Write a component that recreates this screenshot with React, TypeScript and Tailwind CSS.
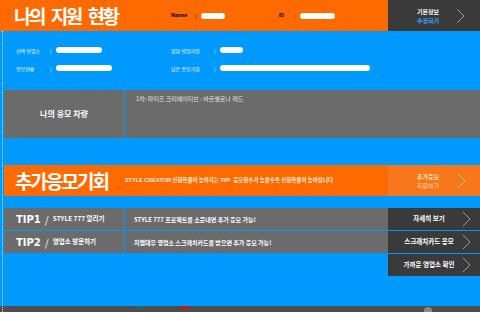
import React from 'react';

const KR = "font-['Noto_Sans_CJK_KR','Noto_Sans',sans-serif]";

const Chevron = ({ color = '#9a9a9a', h = 16 }: { color?: string; h?: number }) => (
  <svg width="9" height={h} viewBox={`0 0 9 ${h}`} className="shrink-0">
    <polyline points={`1,1 8,${h / 2} 1,${h - 1}`} fill="none" stroke={color} strokeWidth="1" />
  </svg>
);

const Pill = ({ w }: { w: string }) => <div className={`h-[6px] rounded-full bg-white ${w}`} />;

const InfoRow = ({ label, pill, lw }: { label: string; pill: string; lw: string }) => (
  <div className="flex h-[6px] items-center">
    <span className={`text-[5px] leading-none text-white ${lw}`}>{label}</span>
    <span className="w-[6px] text-[5px] leading-none text-white">|</span>
    <Pill w={pill} />
  </div>
);

const tips = [
  { tip: 'TIP1', title: 'STYLE 777 알리기', desc: 'STYLE 777 프로젝트를 소문내면 추가 응모 가능!' },
  { tip: 'TIP2', title: '영업소 방문하기', desc: '지엠대우 영업소 스크래치카드를 받으면 추가 응모 가능!' },
];

const buttons = ['자세히 보기', '스크래치카드 응모', '가까운 영업소 확인'];

export default function App() {
  return (
    <div className={`relative flex h-[312px] w-[480px] flex-col overflow-hidden bg-[#0099fe] ${KR}`}>
      {/* header */}
      <div className="flex h-[31px] shrink-0">
        <div className="flex flex-1 items-center bg-[#ff6a00] pl-[14px]">
          <span className="w-[157px] text-[19px] font-bold leading-none tracking-[-2.5px] text-white [word-spacing:5px]">
            나의 지원 현황
          </span>
          <span className="font-['Liberation_Sans',sans-serif] text-[6px] font-bold text-black">Name</span>
          <span className="ml-[8px] mr-[4px] text-[6px] text-black">|</span>
          <Pill w="w-[24px]" />
          <span className="ml-[54px] font-['Liberation_Sans',sans-serif] text-[5px] font-bold text-black">ID</span>
          <span className="ml-[10px] mr-[4px] text-[6px] text-[#a33]">|</span>
          <Pill w="w-[35px]" />
        </div>
        <div className="flex w-[92px] items-center bg-[#3a3a3a] pl-[29px]">
          <div className="flex w-[39px] flex-col text-[6px] font-bold leading-[9px]">
            <span className="text-white">기본정보</span>
            <span className="text-[#3aa4ff]">수정하기</span>
          </div>
          <Chevron />
        </div>
      </div>

      {/* info */}
      <div className="flex h-[59px] shrink-0 pl-[16px] pt-[16px]">
        <div className="flex w-[155px] flex-col gap-[12px]">
          <InfoRow label="선택 영업소" pill="w-[46px]" lw="w-[34px]" />
          <InfoRow label="응모현황" pill="w-[56px]" lw="w-[34px]" />
        </div>
        <div className="flex flex-col gap-[12px]">
          <InfoRow label="담당 영업사원" pill="w-[23px]" lw="w-[43px]" />
          <InfoRow label="남은 응모기회" pill="w-[150px]" lw="w-[43px]" />
        </div>
      </div>

      {/* my car */}
      <div className="ml-[4px] flex h-[48px] shrink-0 gap-px">
        <div className="flex w-[120px] items-center justify-center bg-[#6b6b6b] text-[8px] font-bold text-white">나의 응모 차량</div>
        <div className="flex-1 bg-[#6b6b6b] pl-[11px] pt-[6px] text-[6px] leading-none text-[#e4e4e4]">
          1차: 마티즈 크리에이티브 : 바르셀로나 레드
        </div>
      </div>

      <div className="h-[27px] shrink-0" />

      {/* extra chance */}
      <div className="ml-[4px] flex h-[31px] shrink-0">
        <div className="flex flex-1 items-center bg-[#ff6a00] pl-[11px]">
          <span className="w-[110px] text-[19px] font-bold leading-none tracking-[-2px] text-white">추가응모기회</span>
          <span className="text-[5.5px] font-bold text-[#fff3e0]">
            <span className="font-['Liberation_Sans',sans-serif]">STYLE CREATOR</span> 신청확률이 높아지는{' '}
            <span className="font-['Liberation_Sans',sans-serif]">TIP!</span>&nbsp; 응모횟수가 높을수록 신청확률이 높아집니다
          </span>
        </div>
        <div className="flex w-[92px] items-center bg-[#f8761c] pl-[29px]">
          <div className="flex w-[40px] flex-col text-[6px] font-bold leading-[9px]">
            <span className="text-[#ffe7b0]">추가응모</span>
            <span className="font-normal text-[#ffd9b8]">지원하기</span>
          </div>
          <Chevron color="#ffc99a" />
        </div>
      </div>

      <div className="h-[12px] shrink-0" />

      {/* tips */}
      <div className="flex h-[68px] shrink-0">
        <div className="ml-[4px] flex flex-1 flex-col gap-px">
          {tips.map((t) => (
            <div key={t.tip} className="flex h-[22px] gap-px">
              <div className="flex w-[120px] items-center bg-[#6b6b6b] pl-[12px] text-white">
                <span className="font-['DejaVu_Sans',sans-serif] text-[10px] font-bold">{t.tip}</span>
                <span className="mx-[4px] text-[10px]">/</span>
                <span className="text-[6.5px] font-bold">{t.title}</span>
              </div>
              <div className="flex flex-1 items-center bg-[#6b6b6b] pl-[9px] text-[6px] font-bold text-white">{t.desc}</div>
            </div>
          ))}
        </div>
        <div className="flex w-[92px] flex-col gap-px">
          {buttons.map((b) => (
            <div key={b} className="relative flex h-[22px] items-center justify-center bg-[#3a3a3a] pr-[10px]">
              <span className="text-[6.5px] font-bold text-white">{b}</span>
              <div className="absolute right-[9px] top-[3px]">
                <Chevron h={16} />
              </div>
            </div>
          ))}
        </div>
      </div>

      <div className="flex-1" />

      {/* bottom strip */}
      <div className="relative h-[6px] shrink-0 bg-[#4d4d4d]">
        <div className="absolute left-[136px] top-0 h-[3px] w-[8px] rounded-b-sm bg-[#1d6b5a]" />
        <div className="absolute left-[180px] top-0 h-[4px] w-[10px] rounded-b-sm bg-[#a3262a]" />
        <div className="absolute left-[424px] top-[1px] h-[5px] w-[8px] rounded-t-full bg-[#8a8a8a]" />
      </div>

      {/* dotted guide */}
      <div className="absolute bottom-0 left-[2px] top-[31px] border-l border-dotted border-white/80" />
    </div>
  );
}
